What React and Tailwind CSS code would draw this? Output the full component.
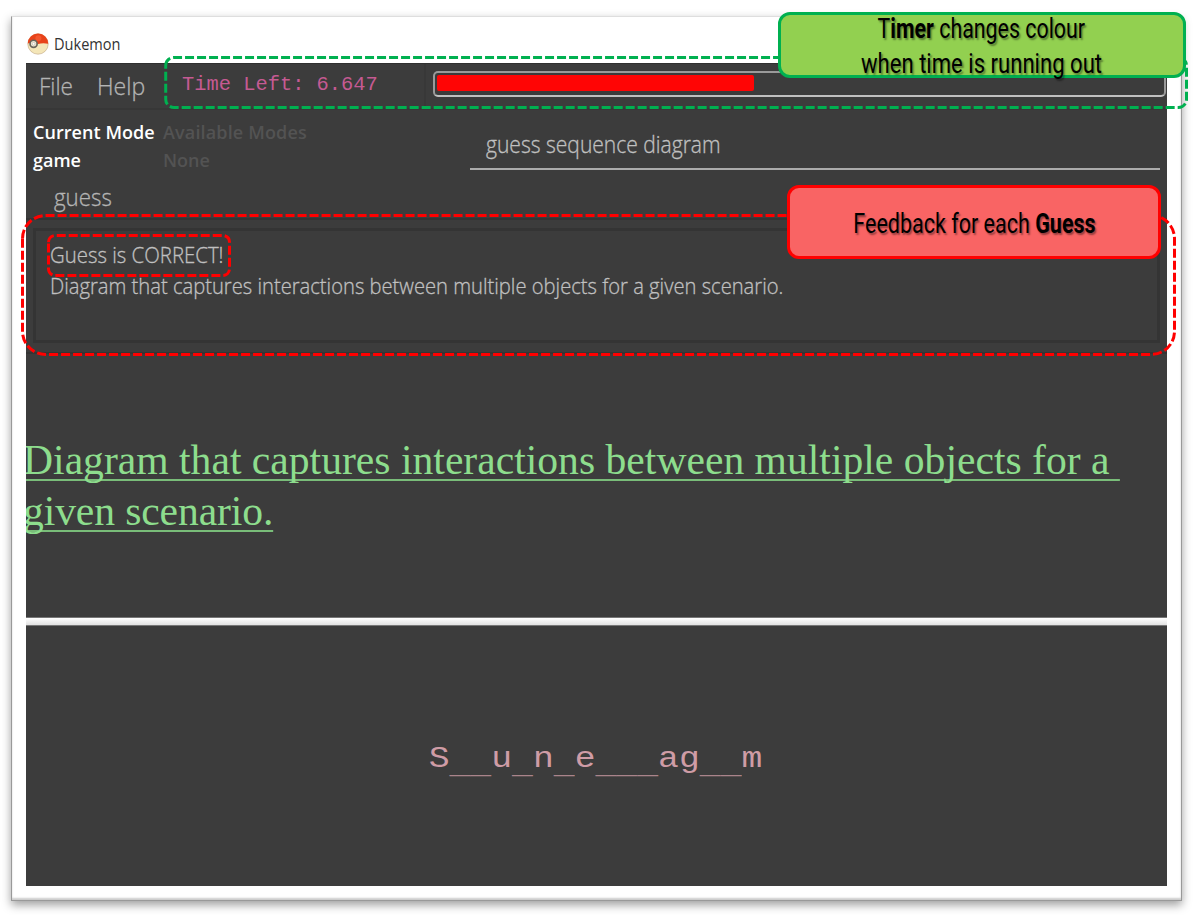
import React from "react";

const SANS = "font-['Open_Sans','Noto_Sans',sans-serif]";

function Pokeball() {
  return (
    <svg className="h-[22px] w-[22px] shrink-0" viewBox="0 0 22 22">
      <circle cx="11" cy="11" r="10.2" fill="#f4e6b8" stroke="#c8b08c" strokeWidth=".7" />
      <path d="M.8 10.5A10.2 10.2 0 0 1 21.2 10.8Q16 9.6 11 11Q5 9 .8 10.5Z" fill="#e8431a" />
      <circle cx="11.4" cy="5.2" r="3" fill="#ff6b42" opacity=".5" />
      <circle cx="6.6" cy="10.8" r="4.4" fill="#6b665c" />
      <circle cx="6.6" cy="10.8" r="2.7" fill="#f0ead5" />
      <circle cx="6.6" cy="10.8" r="1.4" fill="#fff" stroke="#a8a294" strokeWidth=".5" />
    </svg>
  );
}

function DashedFrames() {
  return (
    <svg className="pointer-events-none absolute left-0 top-0" width="1193" height="915" fill="none" strokeWidth="3" strokeDasharray="9 3">
      <path stroke="#00b050" d="M165.7 65.8a8.3 8.3 0 0 1 8.3-8.3H1178.2a8.3 8.3 0 0 1 8.3 8.3V99.2a8.3 8.3 0 0 1-8.3 8.3H174a8.3 8.3 0 0 1-8.3-8.3Z" />
      <path stroke="#f00" d="M22.5 238.6a23.1 23.1 0 0 1 23.1-23.1H1151.4a23.1 23.1 0 0 1 23.1 23.1V331.3a23.1 23.1 0 0 1-23.1 23.1H45.6a23.1 23.1 0 0 1-23.1-23.1Z" />
      <path stroke="#f00" d="M48.5 242.2a6.7 6.7 0 0 1 6.7-6.7H222.8a6.7 6.7 0 0 1 6.7 6.7V268.8a6.7 6.7 0 0 1-6.7 6.7H55.2a6.7 6.7 0 0 1-6.7-6.7Z" />
    </svg>
  );
}

function MenuBar() {
  return (
    <div className="flex h-[47px] border-b-2 border-[#373737] border-t border-t-[#303030] text-[#b4b4b4]">
      <div className="flex w-[144px] items-center pl-[13px] text-[24px] font-light leading-none [-webkit-text-stroke:0.3px]">
        <span className="w-[58px] whitespace-nowrap"><span className="inline-block origin-left scale-x-[0.94]">File</span></span>
        <span className="whitespace-nowrap"><span className="inline-block origin-left scale-x-[0.96]">Help</span></span>
      </div>
      <div className="w-[256px] border-r-2 border-[#383838] pl-[12px] pt-[9px] font-['Liberation_Mono',monospace] text-[20.4px] leading-6 text-[#c55a92]">
        Time Left: 6.647
      </div>
      <div className="flex-1 pl-[7px] pt-[7px]">
        <div className="h-[26px] w-[733px] rounded-[5px] border-2 border-[#9a9a9a] border-b-[#c0c0c0] p-[2px]">
          <div className="h-[16px] w-[317px] rounded-[2px] bg-[#ff0505]" />
        </div>
      </div>
    </div>
  );
}

function ModeRow() {
  return (
    <div className="flex h-[72px]">
      <div className="w-[130px] pl-[7px] pt-[8px] text-[18px] font-semibold leading-[28px] text-white">
        <div className="whitespace-nowrap tracking-[0.05px]">Current Mode</div>
        <div>game</div>
      </div>
      <div className="w-[314px] pl-[7px] pt-[8px] text-[18px] font-semibold leading-[28px] text-[#535353]">
        <div className="whitespace-nowrap tracking-[0.15px]">Available Modes</div>
        <div>None</div>
      </div>
      <div className="mb-[12px] w-[690px] border-b-2 border-[#ababab] pl-[16px] pt-[19px] text-[23px] font-light leading-[30px] text-[#c0c0c0] [-webkit-text-stroke:0.3px]">
        <span className="inline-block origin-left scale-x-[0.915] whitespace-nowrap">guess sequence diagram</span>
      </div>
    </div>
  );
}

function Callout({ className, children }) {
  return (
    <div className={"absolute flex flex-col items-center justify-center rounded-[12px] border-[3px] font-[Roboto,sans-serif] text-[28.5px] leading-[35px] text-black [text-shadow:2px_2px_2px_rgba(0,0,0,0.4)] " + className}>
      {children}
    </div>
  );
}

function Blanks({ children }) {
  return <span className="inline-block translate-y-[7px] opacity-75">{children}</span>;
}

export default function App() {
  return (
    <div className={"relative h-[915px] w-[1193px] overflow-hidden bg-white " + SANS}>
      <div className="flex h-[915px] pl-[11px] pt-[16px]">
        <div className="h-[885px] w-[1171px] border border-[#999] border-t-[#dedede] bg-white px-[14px] shadow-[0_4px_9px_rgba(0,0,0,0.38),inset_0_-2px_2px_#ccc]">
          <div className="flex h-[46px] items-center gap-[5px] pl-[1px] pt-[8px]">
            <Pokeball />
            <span className="origin-left scale-x-[0.91] text-[16px] text-[#333]">Dukemon</span>
          </div>
          <div className="h-[823px] w-[1141px] bg-[#3c3c3c]">
            <MenuBar />
            <ModeRow />
            <div className="h-[36px] pl-[28px] text-[23px] font-light leading-[30px] text-[#b4b4b4] [-webkit-text-stroke:0.3px]">
              <span className="inline-block origin-left scale-x-[0.97]">guess</span>
            </div>
            <div className="h-[136px] border-y-2 border-[#343434] px-[7px] pt-[8px]">
              <div className="h-[115px] border-[3px] border-[#343434] pl-[14px] pt-[8px] text-[22px] font-light leading-[31px] text-[#c0c0c0] [-webkit-text-stroke:0.3px]">
                <div className="origin-left scale-x-[0.926] whitespace-nowrap">Guess is CORRECT!</div>
                <div className="origin-left scale-x-[0.917] whitespace-nowrap">Diagram that captures interactions between multiple objects for a given scenario.</div>
              </div>
            </div>
            <div className="h-[263px] overflow-hidden pt-[81px] font-['Liberation_Serif',serif] text-[41.63px] leading-[51px] text-[#8ddd8d]">
              <div className="ml-[-3px] whitespace-pre underline decoration-[#79bd79] decoration-2 underline-offset-[5px] [text-decoration-skip-ink:none]">{"Diagram that captures interactions between multiple objects for a "}</div>
              <div className="ml-[-3px] whitespace-pre tracking-[-0.12px] underline decoration-[#79bd79] decoration-2 underline-offset-[5px] [text-decoration-skip-ink:none]">given scenario.</div>
            </div>
            <div className="h-[9px] border-y border-[#777] bg-gradient-to-b from-white to-[#e2e2e2]" />
            <div className="flex h-[260px] justify-center pt-[105px] font-['Liberation_Mono',monospace] text-[34.75px] leading-[40px] text-[#cf9ca6]">
              <span className="inline-block -translate-x-px scale-y-[0.86] whitespace-nowrap">
                S<Blanks>__</Blanks>u<Blanks>_</Blanks>n<Blanks>_</Blanks>e<Blanks>___</Blanks>ag<Blanks>__</Blanks>m
              </span>
            </div>
          </div>
        </div>
      </div>
      <DashedFrames />
      <Callout className="left-[778px] top-[12px] h-[66px] w-[408px] border-[#00b050] bg-[#92d050] pt-[2px]">
        <div className="-translate-x-px scale-x-[0.75] whitespace-nowrap">T<b>imer</b> changes colour</div>
        <div className="scale-x-[0.775] whitespace-nowrap">when time is running out</div>
      </Callout>
      <Callout className="left-[787px] top-[185px] h-[74px] w-[374px] border-[#ff0000] bg-[#f96464] pt-[2px]">
        <div className="scale-x-[0.755] whitespace-nowrap">Feedback for each <b>Guess</b></div>
      </Callout>
    </div>
  );
}
